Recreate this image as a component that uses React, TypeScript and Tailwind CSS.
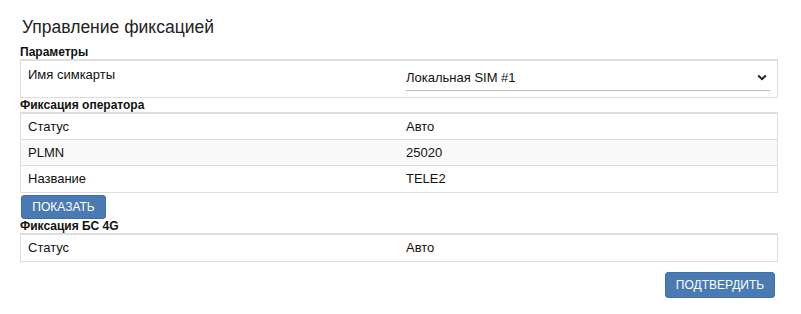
import React from "react";

function Header({ children }: { children: React.ReactNode }) {
  return (
    <div className="h-[14px] text-[12px] leading-[14px] font-bold text-[#111]">{children}</div>
  );
}

function Row({ label, value, striped, last }: { label: string; value: string; striped?: boolean; last?: boolean }) {
  return (
    <div className={`flex h-[26px] items-center ${striped ? "bg-[#f9f9f9]" : "bg-white"} ${last ? "" : "border-b border-[#ddd]"}`}>
      <div className="w-1/2 pl-[7px] text-[13px]">{label}</div>
      <div className="w-1/2 pl-[7px] text-[13px]">{value}</div>
    </div>
  );
}

export default function App() {
  return (
    <div className="w-[801px] h-[314px] bg-white px-[20px] text-[#111] font-['Liberation_Sans',Arial,sans-serif]">
      <div className="w-[758px]">
        <div className="pt-[16px] h-[45px]">
          <h1 className="text-[17.5px] leading-[22px] pl-[2px] text-[#222]">Управление фиксацией</h1>
        </div>
        <Header>Параметры</Header>
        <div className="h-[39px] border border-t-2 border-[#ddd] flex">
          <div className="w-1/2 pl-[7px] pt-[5px] text-[13px] leading-[18px]">Имя симкарты</div>
          <div className="w-1/2 pl-[7px] pr-[7px] pt-[4px]">
            <div className="h-[26px] border-b border-[#bbb] flex items-center justify-between pr-[2px]">
              <span className="text-[13px]">Локальная SIM #1</span>
              <svg width="10" height="7" viewBox="0 0 10 7" className="mr-[1px]">
                <path d="M1.2 1.5 L5 5.2 L8.8 1.5" fill="none" stroke="#222" strokeWidth="2" />
              </svg>
            </div>
          </div>
        </div>
        <Header>Фиксация оператора</Header>
        <div className="border border-t-2 border-[#ddd]">
          <Row label="Статус" value="Авто" />
          <Row label="PLMN" value="25020" striped />
          <Row label="Название" value="TELE2" last />
        </div>
        <div className="pl-[1px] pt-[1px]">
          <button className="h-[24px] w-[85px] rounded-[3px] bg-[#4a7ab4] border border-[#4170a9] text-white text-[12px] uppercase">
            Показать
          </button>
        </div>
        <Header>Фиксация БС 4G</Header>
        <div className="h-[29px] border border-t-2 border-[#ddd] flex items-center">
          <div className="w-1/2 pl-[7px] text-[13px]">Статус</div>
          <div className="w-1/2 pl-[7px] text-[13px]">Авто</div>
        </div>
        <div className="flex justify-end pt-[10px] pr-[3px]">
          <button className="h-[26px] w-[110px] rounded-[3px] bg-[#4a7ab4] border border-[#4170a9] text-white text-[12px] uppercase">
            Подтвердить
          </button>
        </div>
      </div>
    </div>
  );
}
